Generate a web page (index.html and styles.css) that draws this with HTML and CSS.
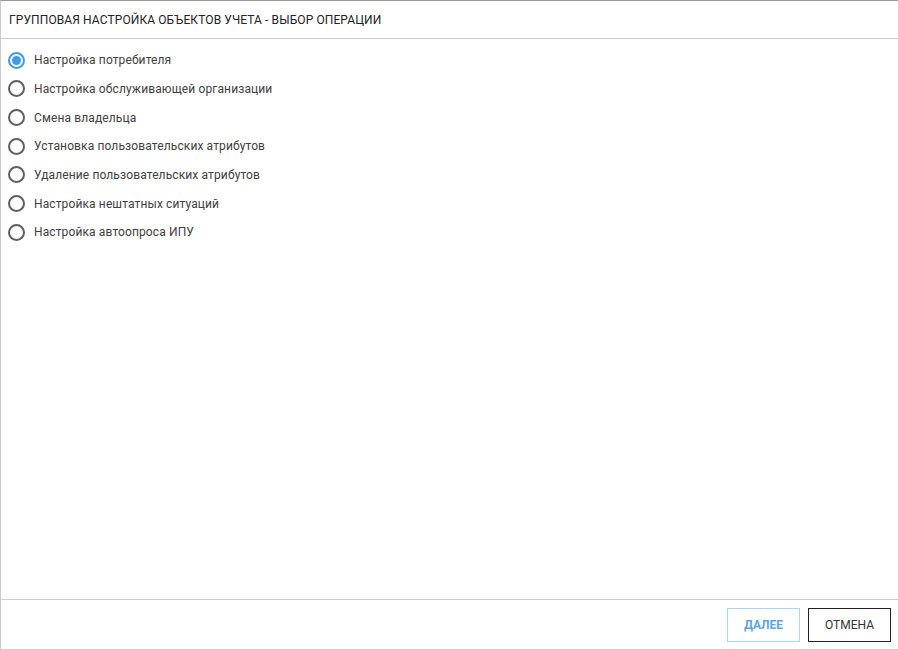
FILE: index.html
```html
<!DOCTYPE html>
<html lang="ru">
<head>
<meta charset="utf-8">
<link rel="stylesheet" href="styles.css">
</head>
<body>
<div class="dialog">
  <div class="header">Групповая настройка объектов учета - выбор операции</div>
  <div class="list">
    <label class="row"><span class="radio checked"></span><span class="label">Настройка потребителя</span></label>
    <label class="row"><span class="radio"></span><span class="label">Настройка обслуживающей организации</span></label>
    <label class="row"><span class="radio"></span><span class="label">Смена владельца</span></label>
    <label class="row"><span class="radio"></span><span class="label">Установка пользовательских атрибутов</span></label>
    <label class="row"><span class="radio"></span><span class="label">Удаление пользовательских атрибутов</span></label>
    <label class="row"><span class="radio"></span><span class="label">Настройка нештатных ситуаций</span></label>
    <label class="row"><span class="radio"></span><span class="label">Настройка автоопроса ИПУ</span></label>
  </div>
  <div class="footer">
    <button class="btn btn-next">Далее</button>
    <button class="btn btn-cancel">Отмена</button>
  </div>
</div>
</body>
</html>
```
FILE: styles.css
```css
html, body {
  margin: 0;
  padding: 0;
  background: #fff;
}
body {
  font-family: Roboto, "Liberation Sans", sans-serif;
  color: #333;
}
.dialog {
  box-sizing: border-box;
  width: 898px;
  height: 650px;
  border-top: 1px solid #999;
  border-left: 1px solid #ccc;
  border-bottom: 1px solid #ccc;
  display: flex;
  flex-direction: column;
}
.header {
  height: 37px;
  border-bottom: 1px solid #ccc;
  padding-left: 8px;
  display: flex;
  align-items: center;
  font-size: 12px;
  text-transform: uppercase;
  color: #222;
  letter-spacing: 0.1px;
}
.list {
  flex: 1;
  padding-top: 7px;
  display: flex;
  flex-direction: column;
}
.row {
  height: 28.67px;
  display: flex;
  align-items: center;
  padding-left: 7px;
}
.radio {
  box-sizing: border-box;
  width: 17px;
  height: 17px;
  border: 2px solid #5f5f5f;
  border-radius: 50%;
  margin-right: 9px;
  display: flex;
  align-items: center;
  justify-content: center;
  flex: none;
}
.radio.checked {
  border-color: #3f9bea;
}
.radio.checked::after {
  content: "";
  width: 9px;
  height: 9px;
  border-radius: 50%;
  background: #3f9bea;
}
.label {
  font-size: 12px;
  color: #404040;
  letter-spacing: 0.12px;
}
.footer {
  box-sizing: border-box;
  height: 50px;
  flex: none;
  border-top: 1px solid #ccc;
  display: flex;
  justify-content: flex-end;
  align-items: flex-start;
  padding: 8px 7px 0 0;
  gap: 8px;
}
.btn {
  font-family: Roboto, "Liberation Sans", sans-serif;
  font-size: 12px;
  text-transform: uppercase;
  background: #fff;
  height: 34px;
  padding: 0;
  cursor: pointer;
}
.btn-next {
  width: 73px;
  border: 1px solid #a9d5f7;
  color: #5ba4e6;
  font-weight: 700;
}
.btn-cancel {
  width: 83px;
  border: 1px solid #222;
  color: #333;
}
```
